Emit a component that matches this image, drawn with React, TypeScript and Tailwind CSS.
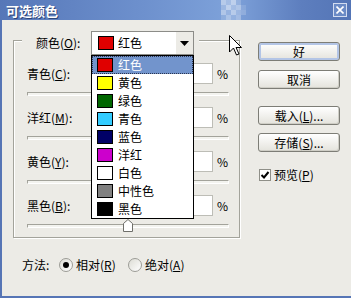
import React from 'react';

const colors = [
  { name: '红色', swatch: 'bg-[#e00000]' },
  { name: '黄色', swatch: 'bg-[#ffff00]' },
  { name: '绿色', swatch: 'bg-[#006600]' },
  { name: '青色', swatch: 'bg-[#33ccff]' },
  { name: '蓝色', swatch: 'bg-[#000066]' },
  { name: '洋红', swatch: 'bg-[#cc00cc]' },
  { name: '白色', swatch: 'bg-white' },
  { name: '中性色', swatch: 'bg-[#808080]' },
  { name: '黑色', swatch: 'bg-black' },
];

const sliders = [
  { label: '青色', key: 'C' },
  { label: '洋红', key: 'M' },
  { label: '黄色', key: 'Y' },
  { label: '黑色', key: 'B', thumb: true },
];

// label with underlined access key, e.g. 颜色(O):
const Key = ({ label, k, colon = false }: { label: string; k: string; colon?: boolean }) => (
  <>
    {label}(<span className="underline underline-offset-[1px]">{k}</span>){colon ? ':' : ''}
  </>
);

const Deco = () => {
  const rows = [
    [0.45, 0.3, 0.5, 0.2, 0],
    [0.25, 0.5, 0.3, 0.4, 0.12],
    [0.4, 0.2, 0.45, 0.25, 0.18],
    [0.15, 0.35, 0.18, 0.3, 0],
  ];
  return (
    <svg className="absolute left-[221px] top-0" width="26" height="20" viewBox="0 0 26 20">
      {rows.map((r, y) =>
        r.map((o, x) => <rect key={`${x}-${y}`} x={x * 5} y={y * 5} width="5" height="5" fill="#fff" opacity={o} />)
      )}
    </svg>
  );
};

const TitleBar = () => (
  <div className="relative flex h-[20px] items-center justify-between bg-[linear-gradient(90deg,#5677b8_0%,#6d90cd_40%,#7ea2da_66%,#5d7ebe_86%,#5475b6_100%)] pl-[6px] pr-[4px]">
    <span className="text-[13px] font-bold leading-none text-white [text-shadow:1px_1px_0_#2d4577]">可选颜色</span>
    <Deco />
    <div className="relative flex h-[14px] w-[14px] items-center justify-center border border-[#d2dcf0] bg-[#6b8bc6]">
      <svg width="8" height="8" viewBox="0 0 8 8">
        <path d="M0.5 0.5 L7.5 7.5 M7.5 0.5 L0.5 7.5" stroke="#fff" strokeWidth="1.6" />
      </svg>
    </div>
  </div>
);

const ColorSelect = () => (
  <div className="relative h-[24px] w-[103px]">
    <div className="flex h-[24px] w-[103px] items-center border border-[#8c8c88] bg-white">
      <span className="ml-[6px] h-[14px] w-[16px] border border-black bg-[#e00000]" />
      <span className="ml-[4px] flex-1">红色</span>
      <span className="flex h-full w-[17px] items-center justify-center bg-[#ecebe6]">
        <svg width="9" height="5" viewBox="0 0 9 5">
          <polygon points="0,0 9,0 4.5,5" fill="#000" />
        </svg>
      </span>
    </div>
    <div className="absolute left-0 top-[24px] z-10 w-[103px] border border-black bg-white">
      {colors.map((c, i) => (
        <div
          key={c.name}
          className={
            i === 0
              ? 'flex h-[18px] items-center border border-dotted border-[#2b3550] bg-[#7294cc] pl-[4px] text-white'
              : 'flex h-[18px] items-center pl-[5px]'
          }
        >
          <span className={`h-[14px] w-[16px] border border-black ${c.swatch}`} />
          <span className="ml-[5px]">{c.name}</span>
        </div>
      ))}
    </div>
  </div>
);

const SliderRow = ({ label, k, first, thumb }: { label: string; k: string; first?: boolean; thumb?: boolean }) => (
  <div className={first ? 'mt-[8px]' : 'mt-[11px]'}>
    <div className="flex h-[21px] items-center pl-[13px]">
      <span className="w-[138px]">
        <Key label={label} k={k} colon />
      </span>
      <div className="h-[21px] w-[48px] border border-[#bdbdb6] bg-white pl-[3px] leading-[19px]">0</div>
      <span className="ml-[4px]">%</span>
    </div>
    <div className="relative ml-[13px] mt-[8px] h-[4px] w-[202px] border border-[#a3a39b] border-b-white border-r-white bg-[#f3f3ef]">
      {thumb && (
        <svg className="absolute left-[95px] top-[-6px]" width="10" height="13" viewBox="0 0 10 13">
          <polygon points="0.5,4.5 5,0.5 9.5,4.5 9.5,12.5 0.5,12.5" fill="#fff" stroke="#6f6f6a" />
        </svg>
      )}
    </div>
  </div>
);

const GroupBox = () => (
  <div className="w-[227px] border border-[#a3a39b] pb-[9px] shadow-[inset_1px_1px_0_#fff,1px_1px_0_#fff]">
    <div className="relative z-10 -mt-[10px] ml-[8px] flex h-[24px] w-[177px] items-center bg-[#ecebe6] pl-[14px]">
      <span className="w-[55px]">
        <Key label="颜色" k="O" colon />
      </span>
      <ColorSelect />
    </div>
    {sliders.map((s, i) => (
      <SliderRow key={s.key} label={s.label} k={s.key} first={i === 0} thumb={s.thumb} />
    ))}
  </div>
);

const Radio = ({ on }: { on?: boolean }) => (
  <span className="flex h-[14px] w-[14px] items-center justify-center rounded-full border border-[#9c9c96] bg-gradient-to-br from-[#dcdcd5] to-white">
    {on && <span className="h-[6px] w-[6px] rounded-full bg-black" />}
  </span>
);

const Btn = ({ children, def, className = '' }: { children: React.ReactNode; def?: boolean; className?: string }) => (
  <div
    className={`flex h-[19px] w-[82px] items-center justify-center rounded-[3px] border border-[#7d7d76] bg-gradient-to-b from-white to-[#e4e3dc] ${
      def ? 'shadow-[inset_0_0_0_2px_#b3c5e6]' : 'shadow-[inset_-1px_-1px_0_#cfcec6]'
    } ${className}`}
  >
    {children}
  </div>
);

export default function App() {
  return (
    <div className="relative h-[298px] w-[351px] overflow-hidden font-['Noto_Sans_CJK_SC','Noto_Sans',sans-serif] text-[12px] leading-none text-black">
      <TitleBar />
      <div className="flex h-[278px] border-b-2 border-l-2 border-[#5675b5] bg-[#ecebe6]">
        <div className="flex flex-col pl-[11px] pt-[20px]">
          <GroupBox />
          <div className="ml-[9px] mt-[19px] flex h-[16px] items-center">
            <span className="w-[37px]">方法:</span>
            <Radio on />
            <span className="ml-[3px] w-[52px]">
              <Key label="相对" k="R" />
            </span>
            <Radio />
            <span className="ml-[3px]">
              <Key label="绝对" k="A" />
            </span>
          </div>
        </div>
        <div className="ml-[18px] flex w-[82px] flex-col pt-[22px]">
          <Btn def>好</Btn>
          <Btn className="mt-[9px]">取消</Btn>
          <Btn className="mt-[17px]">
            <Key label="载入" k="L" />
            ...
          </Btn>
          <Btn className="mt-[8px]">
            <Key label="存储" k="S" />
            ...
          </Btn>
          <div className="mt-[17px] flex h-[12px] items-center">
            <span className="ml-[1px] flex h-[12px] w-[12px] items-center justify-center border border-[#8f8f88] bg-white">
              <svg width="10" height="10" viewBox="0 0 10 10">
                <path d="M1.5 5 L4 7.5 L8.5 2" stroke="#000" strokeWidth="2" fill="none" />
              </svg>
            </span>
            <span className="ml-[3px]">
              <Key label="预览" k="P" />
            </span>
          </div>
        </div>
      </div>
      <svg className="absolute left-[229px] top-[35px]" width="13" height="21" viewBox="0 0 13 21">
        <path d="M0.5 0.5 V17 L4.5 13 L7.5 20 L10 19 L7 12.5 L12.5 12.5 Z" fill="#fff" stroke="#000" />
      </svg>
    </div>
  );
}
